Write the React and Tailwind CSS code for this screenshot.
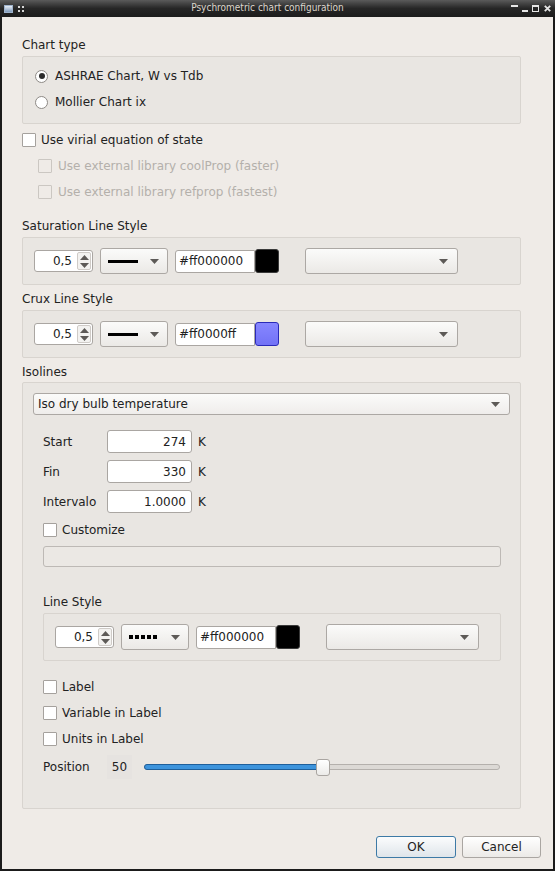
import React from 'react';

// Psychrometric chart configuration dialog, Qt-style widgets

function Arrow({ className = '' }) {
    return (
        <svg width="9" height="5" viewBox="0 0 9 5" className={className}>
            <path d="M0 0 L9 0 L4.5 5 Z" fill="#5d5a57" />
        </svg>
    );
}

function Radio({ checked, label }) {
    return (
        <div className="flex items-center h-5 gap-[7px]">
            <span className="w-[13px] h-[13px] rounded-full bg-white border border-[#8e8a86] flex items-center justify-center">
                {checked && <span className="w-[6px] h-[6px] rounded-full bg-[#2b2b2b]" />}
            </span>
            <span>{label}</span>
        </div>
    );
}

function Check({ label, disabled, gap = 'gap-[6px]' }) {
    return (
        <div className={`flex items-center h-5 ${gap} ${disabled ? 'text-[#b4b0ab]' : ''}`}>
            <span className={`w-[14px] h-[14px] rounded-[1px] border ${disabled ? 'border-[#cbc7c2] bg-[#efebe7]' : 'border-[#a5a19d] bg-white'}`} />
            <span>{label}</span>
        </div>
    );
}

function Spin({ value }) {
    return (
        <div className="w-[59px] h-[22px] bg-white border border-[#aaa6a2] rounded-[3px] flex overflow-hidden">
            <div className="flex-1 flex items-center justify-end pr-[5px]">{value}</div>
            <div className="w-[14px] my-[1px] mr-[1px] border border-[#cfcbc7] rounded-[2px] bg-[#f3f2f0] flex flex-col items-center justify-center gap-[3px]">
                <Arrow className="rotate-180" />
                <Arrow />
            </div>
        </div>
    );
}

function LineCombo({ dotted }) {
    return (
        <div className="w-[68px] h-[26px] border border-[#aca8a4] rounded-[3px] bg-gradient-to-b from-[#fbfbfa] to-[#ebe9e6] flex items-center pl-[7px] pr-[8px]">
            {dotted ? (
                <div className="flex gap-[2px] w-[30px]">
                    {[0, 1, 2, 3, 4].map(i => (
                        <span key={i} className="w-[4px] h-[4px] bg-black" />
                    ))}
                </div>
            ) : (
                <span className="w-[30px] h-[3px] bg-black" />
            )}
            <Arrow className="ml-auto" />
        </div>
    );
}

function ColorField({ value, swatch }) {
    return (
        <div className="flex items-center">
            <div className="w-[80px] h-[23px] bg-white border border-[#aaa6a2] rounded-l-[3px] flex items-center pl-[3px]">{value}</div>
            <span className={`w-[24px] h-[24px] rounded-[3px] border ${swatch}`} />
        </div>
    );
}

function EmptyCombo() {
    return (
        <div className="w-[153px] h-[26px] border border-[#aca8a4] rounded-[3px] bg-gradient-to-b from-[#fbfbfa] to-[#ebe9e6] flex items-center justify-end pr-[9px]">
            <Arrow />
        </div>
    );
}

function LineStyleBox({ color, swatch, dotted, className = '' }) {
    return (
        <div className={`h-[48px] border border-[#d8d4cf] rounded-[2px] bg-[#e9e6e2] flex items-center pl-[11px] ${className}`}>
            <Spin value="0,5" />
            <div className="ml-[7px]"><LineCombo dotted={dotted} /></div>
            <div className="ml-[7px]"><ColorField value={color} swatch={swatch} /></div>
            <div className="ml-[26px]"><EmptyCombo /></div>
        </div>
    );
}

function FieldRow({ label, value, className = '' }) {
    return (
        <div className={`flex items-center h-[23px] ${className}`}>
            <span className="w-[64px]">{label}</span>
            <div className="w-[85px] h-[23px] bg-white border border-[#aaa6a2] rounded-[3px] flex items-center justify-end pr-[5px]">{value}</div>
            <span className="ml-[6px]">K</span>
        </div>
    );
}

function TitleBar() {
    return (
        <div className="h-[17px] bg-gradient-to-b from-[#5b5b5b] via-[#262626] to-[#1c1c1c] flex items-center px-[4px] relative">
            <span className="w-[9px] h-[8px] border border-[#9fb3cc] bg-gradient-to-b from-[#e8eef6] to-[#7f9abb]" />
            <div className="ml-[5px] grid grid-cols-2 gap-[2px]">
                {[0, 1, 2, 3].map(i => <span key={i} className="w-[2px] h-[2px] bg-[#d8d8d8]" />)}
            </div>
            <span className="flex-1 text-center text-[10px] leading-none text-[#dcd6cc] font-['DejaVu_Sans_Condensed','DejaVu_Sans',sans-serif] [font-stretch:condensed] pb-[2px]">
                Psychrometric chart configuration
            </span>
            <div className="flex items-center gap-[4px] text-[#e6e6e6]">
                <span className="w-[7px] h-[2px] bg-[#e6e6e6] mb-[5px]" />
                <span className="w-[6px] h-[2px] bg-[#e6e6e6] mt-[5px]" />
                <span className="w-[7px] h-[7px] border-[1.5px] border-[#e6e6e6] border-t-[2px]" />
                <svg width="7" height="7" viewBox="0 0 7 7" className="ml-[1px]">
                    <path d="M0.8 0.8 L6.2 6.2 M6.2 0.8 L0.8 6.2" stroke="#e6e6e6" strokeWidth="1.8" />
                </svg>
            </div>
        </div>
    );
}

export default function App() {
    return (
        <div className="w-[555px] h-[871px] bg-[#1b1b1b] flex flex-col font-['DejaVu_Sans',sans-serif] text-[12px] text-[#222] leading-none">
            <TitleBar />
            <div className="flex-1 mx-[2px] mb-[2px] bg-[#efebe7] flex flex-col pl-[20px] pr-[12px] pt-[20px]">
                {/* Chart type */}
                <div className="h-4 flex items-center">Chart type</div>
                <div className="mt-[3px] w-[499px] h-[68px] border border-[#d8d4cf] rounded-[2px] bg-[#e9e6e2] pl-[12px] pt-[9px] flex flex-col gap-[6px]">
                    <Radio checked label="ASHRAE Chart, W vs Tdb" />
                    <Radio label="Mollier Chart ix" />
                </div>

                <div className="mt-[6px]"><Check label="Use virial equation of state" gap="gap-[5px]" /></div>
                <div className="mt-[6px] pl-[16px]"><Check disabled label="Use external library coolProp (faster)" /></div>
                <div className="mt-[6px] pl-[16px]"><Check disabled label="Use external library refprop (fastest)" /></div>

                {/* Saturation / crux lines */}
                <div className="mt-[16px] h-4 flex items-center">Saturation Line Style</div>
                <LineStyleBox className="mt-[3px] w-[499px]" color="#ff000000" swatch="bg-black border-[#3a3a3a]" />

                <div className="mt-[6px] h-4 flex items-center">Crux Line Style</div>
                <LineStyleBox className="mt-[3px] w-[499px]" color="#ff0000ff" swatch="bg-gradient-to-b from-[#8787ff] to-[#7272f6] border-[#2a2ab8]" />

                {/* Isolines */}
                <div className="mt-[6px] h-4 flex items-center">Isolines</div>
                <div className="mt-[2px] w-[499px] h-[427px] border border-[#d8d4cf] rounded-[2px] bg-[#e9e6e2] px-[10px] pt-[10px] flex flex-col">
                    <div className="h-[22px] border border-[#aca8a4] rounded-[3px] bg-gradient-to-b from-[#fbfbfa] to-[#efedeb] flex items-center pl-[4px] pr-[9px]">
                        <span>Iso dry bulb temperature</span>
                        <Arrow className="ml-auto" />
                    </div>

                    <div className="pl-[10px] flex flex-col">
                        <FieldRow className="mt-[15px]" label="Start" value="274" />
                        <FieldRow className="mt-[7px]" label="Fin" value="330" />
                        <FieldRow className="mt-[7px]" label="Intervalo" value="1.0000" />

                        <div className="mt-[7px]"><Check label="Customize" gap="gap-[5px]" /></div>
                        <div className="mt-[6px] w-[458px] h-[21px] border border-[#bdb9b5] rounded-[3px] bg-[#ebe8e4]" />

                        <div className="mt-[27px] h-4 flex items-center">Line Style</div>
                        <LineStyleBox className="mt-[3px] w-[458px]" dotted color="#ff000000" swatch="bg-black border-[#3a3a3a]" />

                        <div className="mt-[16px]"><Check label="Label" gap="gap-[5px]" /></div>
                        <div className="mt-[6px]"><Check label="Variable in Label" gap="gap-[5px]" /></div>
                        <div className="mt-[6px]"><Check label="Units in Label" gap="gap-[5px]" /></div>

                        <div className="mt-[6px] h-[24px] flex items-center">
                            <span className="w-[64px]">Position</span>
                            <span className="w-[25px] h-[24px] bg-[#e6e3e0] flex items-center justify-center">50</span>
                            <div className="ml-[12px] w-[356px] h-[18px] relative flex items-center">
                                <div className="w-full h-[6px] rounded-full border border-[#b4b0ac] bg-[#dcd9d5]" />
                                <div className="absolute left-0 w-[179px] h-[6px] rounded-full border border-[#1f5f9a] bg-[#3d94dc]" />
                                <div className="absolute left-[172px] w-[14px] h-[17px] rounded-[3px] border border-[#a9a5a1] bg-gradient-to-b from-white to-[#ecebe9]" />
                            </div>
                        </div>
                    </div>
                </div>

                {/* Dialog buttons */}
                <div className="mt-[27px] flex justify-end gap-[6px]">
                    <button className="w-[80px] h-[22px] rounded-[3px] border border-[#3d7aa6] bg-gradient-to-b from-[#fbfcfd] to-[#dfe5ea] flex items-center justify-center">OK</button>
                    <button className="w-[79px] h-[22px] rounded-[3px] border border-[#aaa6a2] bg-gradient-to-b from-white to-[#eceae7] flex items-center justify-center">Cancel</button>
                </div>
            </div>
        </div>
    );
}
